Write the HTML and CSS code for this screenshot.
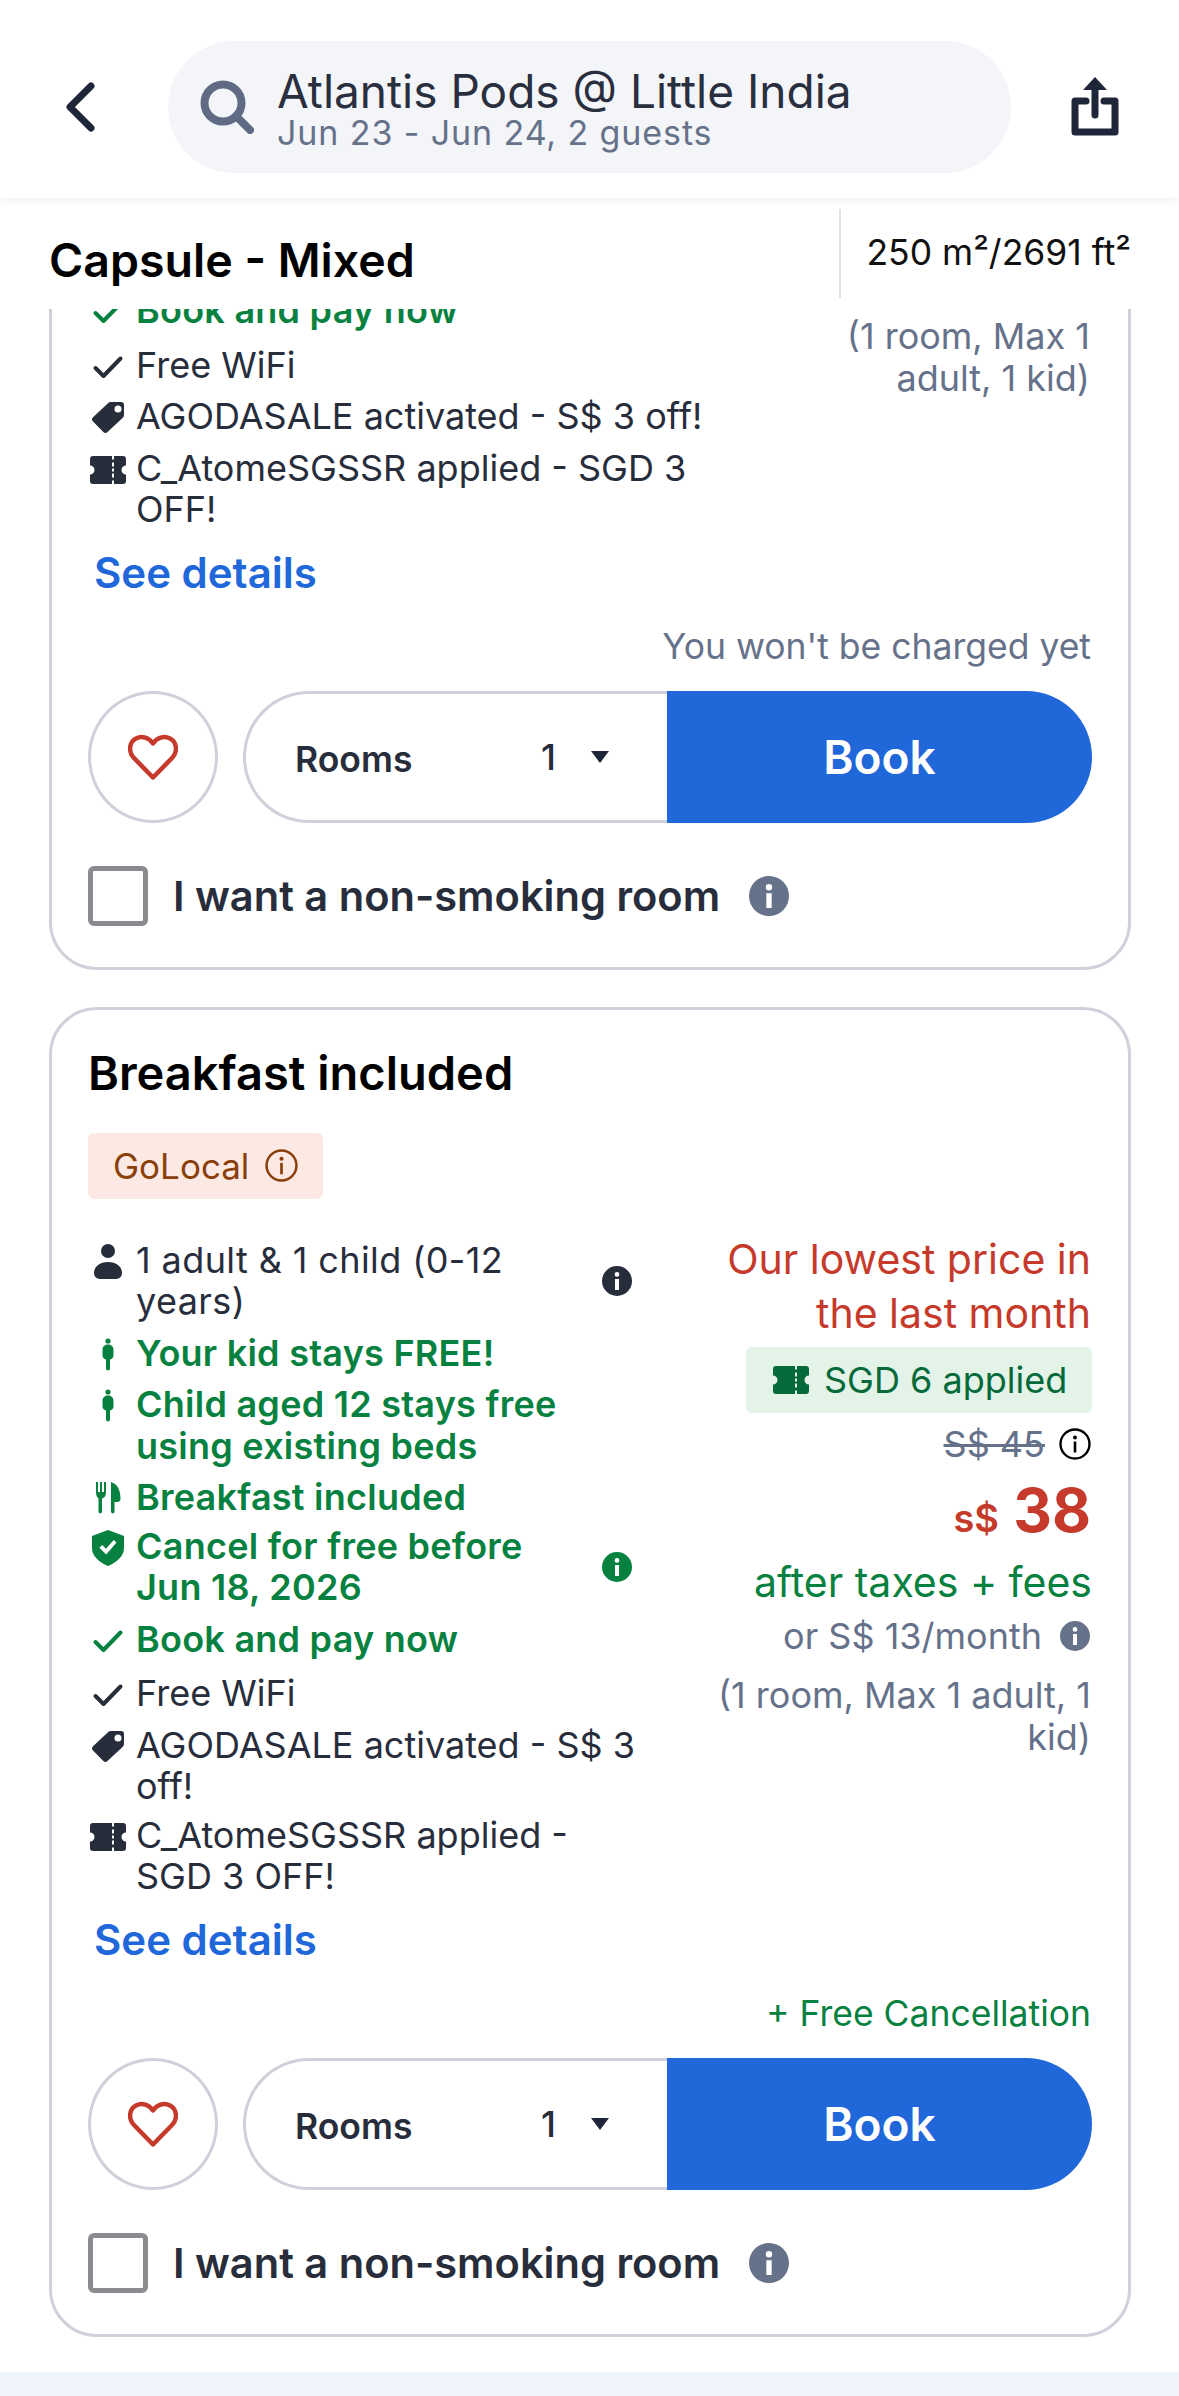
FILE: index.html
```html
<!DOCTYPE html>
<html lang="en">
<head>
    <meta charset="utf-8">
    <title>Atlantis Pods @ Little India</title>
    <link rel="stylesheet" href="styles.css">
</head>
<body>
    <svg class="sprite" xmlns="http://www.w3.org/2000/svg">
        <symbol id="i-ticket" viewBox="0 0 36 28">
            <path fill-rule="evenodd" d="M3 0h19v3.500h2V0h9a3 3 0 0 1 3 3v6.500a4.500 4.500 0 0 0 0 9V25a3 3 0 0 1-3 3h-9v-3.500h-2V28H3a3 3 0 0 1-3-3v-6.500a4.500 4.500 0 0 0 0-9V3a3 3 0 0 1 3-3zM22 6.500v4h2v-4zM22 12.500v3h2v-3zM22 17.500v4h2v-4z"/>
        </symbol>
        <symbol id="i-tag" viewBox="0 0 36 36">
            <path fill-rule="evenodd" d="M21 2h10a3 3 0 0 1 3 3v10a4 4 0 0 1-1.200 2.800L17.500 32a3 3 0 0 1-4.200 0L3 21.500a3 3 0 0 1 0-4.200L18 3.200A4 4 0 0 1 21 2zm7 3.500a3.500 3.500 0 1 0 0 7a3.500 3.500 0 0 0 0-7z"/>
        </symbol>
        <symbol id="i-check" viewBox="0 0 36 36">
            <path d="M5.500 19l8 8L30.500 9.500" fill="none" stroke="currentColor" stroke-width="4" stroke-linecap="round" stroke-linejoin="round"/>
        </symbol>
        <symbol id="i-info" viewBox="0 0 30 30">
            <path fill-rule="evenodd" d="M15 0a15 15 0 1 1 0 30a15 15 0 0 1 0-30zm0 6a2.400 2.400 0 1 0 0 4.800a2.400 2.400 0 0 0 0-4.800zm-2 7v11h4V13z"/>
        </symbol>
        <symbol id="i-info-line" viewBox="0 0 32 32">
            <circle cx="16" cy="16" r="14.500" fill="none" stroke="currentColor" stroke-width="2.400"/>
            <circle cx="16" cy="9.500" r="2"/>
            <rect x="14.700" y="13.500" width="2.600" height="11"/>
        </symbol>
        <symbol id="i-heart" viewBox="0 0 50 46">
            <path d="M25 43.500L6 24C0 18 1 8 8 4.500c6-3 13-1 17 5c4-6 11-8 17-5c7 3.500 8 13.500 2 19.500z" fill="none" stroke="currentColor" stroke-width="4.500" stroke-linejoin="round"/>
        </symbol>
        <symbol id="i-child" viewBox="0 0 36 36">
            <circle cx="18" cy="4" r="2.600"/>
            <path d="M18 7.500c3 0 5.500 2 5.500 5v6c0 2-1.500 3.500-3.500 4v9a2 2 0 0 1-4 0v-9c-2-.5-3.500-2-3.500-4v-6c0-3 2.500-5 5.500-5z"/>
        </symbol>
        <symbol id="i-person" viewBox="0 0 36 36">
            <circle cx="18" cy="7" r="7"/>
            <path d="M18 18c9 0 14 5 14 11c0 4-3 6-7 6H11c-4 0-7-2-7-6c0-6 5-11 14-11z"/>
        </symbol>
        <symbol id="i-meal" viewBox="0 0 36 36">
            <path d="M6 1h2v10h2V1h2v10h2V1h2v11c0 3-1.800 5-4 5.500V31a1.800 1.800 0 0 1-3.500 0V17.500C8 17 6 15 6 12z"/>
            <path d="M21 1c6 2 9.500 7 9.500 17c0 2-1.500 3-3 3h-3v10a1.800 1.800 0 0 1-3.500 0z"/>
        </symbol>
        <symbol id="i-shield" viewBox="0 0 36 36">
            <path fill-rule="evenodd" d="M18 0l16 6v12c0 8-7 14-16 18C9 32 2 26 2 18V6zm8.500 12.500l-2.800-2.400-7.700 8.700-3.800-3.800-2.800 2.800 6.800 6.800z"/>
        </symbol>
    </svg>

    <header class="topbar">
        <svg class="back-icon" viewBox="0 0 32 50"><path d="M27 4L6 25l21 21" fill="none" stroke="#20263a" stroke-width="7" stroke-linecap="round" stroke-linejoin="round"/></svg>
        <div class="search-pill">
            <svg class="search-icon" viewBox="0 0 54 54"><circle cx="23" cy="23" r="18.500" fill="none" stroke="#5f6b85" stroke-width="8"/><path d="M36 36l14 14" stroke="#5f6b85" stroke-width="8" stroke-linecap="round"/></svg>
            <div class="search-text">
                <div class="hotel-name">Atlantis Pods @ Little India</div>
                <div class="stay-dates">Jun 23 - Jun 24, 2 guests</div>
            </div>
        </div>
        <svg class="share-icon" viewBox="0 0 50 60"><path d="M16 24H5v31h40V24H34" fill="none" stroke="#20263a" stroke-width="7" stroke-linecap="round" stroke-linejoin="round"/><path d="M25 38V8" stroke="#20263a" stroke-width="7" stroke-linecap="round"/><path d="M25 0l12 13H13z" fill="#20263a"/></svg>
    </header>

    <div class="room-head">
        <h2>Capsule - Mixed</h2>
        <div class="room-size">250 m²/2691 ft²</div>
    </div>

    <main class="room-list">
        <section class="card card-scrolled">
            <div class="card-body">
                <ul class="perks perks-wide">
                    <li class="perk green bold"><svg class="perk-icon"><use href="#i-check"/></svg><span>Book and pay now</span></li>
                    <li class="perk"><svg class="perk-icon"><use href="#i-check"/></svg><span>Free WiFi</span></li>
                    <li class="perk"><svg class="perk-icon"><use href="#i-tag"/></svg><span>AGODASALE activated - S$ 3 off!</span></li>
                    <li class="perk"><svg class="perk-icon"><use href="#i-ticket"/></svg><span>C_AtomeSGSSR applied - SGD 3 OFF!</span></li>
                </ul>
                <div class="price-col price-narrow">
                    <div class="occupancy">(1 room, Max 1 adult, 1 kid)</div>
                </div>
            </div>
            <a class="see-details">See details</a>
            <div class="book-note">You won't be charged yet</div>
            <div class="book-row">
                <div class="fav-btn"><svg class="heart-icon"><use href="#i-heart"/></svg></div>
                <div class="rooms-select"><span class="rooms-label">Rooms</span><span class="rooms-count">1</span><span class="caret"></span></div>
                <div class="book-btn">Book</div>
            </div>
            <div class="smoke-row">
                <span class="checkbox"></span>
                <span class="smoke-label">I want a non-smoking room</span>
                <svg class="smoke-info"><use href="#i-info"/></svg>
            </div>
        </section>

        <section class="card card-full">
            <h3 class="card-title">Breakfast included</h3>
            <div class="promo-tag">GoLocal <svg class="promo-info"><use href="#i-info-line"/></svg></div>
            <div class="card-body body-gap">
                <ul class="perks perks-tight">
                    <li class="perk perk-loose">
                        <svg class="perk-icon"><use href="#i-person"/></svg>
                        <span>1 adult &amp; 1 child (0-12 years)</span>
                        <svg class="row-info"><use href="#i-info"/></svg>
                    </li>
                    <li class="perk green bold"><svg class="perk-icon"><use href="#i-child"/></svg><span>Your kid stays FREE!</span></li>
                    <li class="perk green bold"><svg class="perk-icon"><use href="#i-child"/></svg><span>Child aged 12 stays free using existing beds</span></li>
                    <li class="perk perk-close green bold"><svg class="perk-icon"><use href="#i-meal"/></svg><span>Breakfast included</span></li>
                    <li class="perk green bold">
                        <svg class="perk-icon"><use href="#i-shield"/></svg>
                        <span>Cancel for free before Jun 18, 2026</span>
                        <svg class="row-info"><use href="#i-info"/></svg>
                    </li>
                    <li class="perk green bold"><svg class="perk-icon"><use href="#i-check"/></svg><span>Book and pay now</span></li>
                    <li class="perk"><svg class="perk-icon"><use href="#i-check"/></svg><span>Free WiFi</span></li>
                    <li class="perk perk-close"><svg class="perk-icon"><use href="#i-tag"/></svg><span>AGODASALE activated - S$ 3 off!</span></li>
                    <li class="perk"><svg class="perk-icon"><use href="#i-ticket"/></svg><span>C_AtomeSGSSR applied - SGD 3 OFF!</span></li>
                </ul>
                <div class="price-col">
                    <div class="lowest">Our lowest price in the last month</div>
                    <div class="coupon"><svg class="coupon-icon"><use href="#i-ticket"/></svg>SGD 6 applied</div>
                    <div class="old-price"><s>S$ 45</s><svg class="old-info"><use href="#i-info-line"/></svg></div>
                    <div class="new-price"><span class="currency">S$</span> 38</div>
                    <div class="after-tax">after taxes + fees</div>
                    <div class="monthly">or S$ 13/month <svg class="monthly-info"><use href="#i-info"/></svg></div>
                    <div class="occupancy">(1 room, Max 1 adult, 1 kid)</div>
                </div>
            </div>
            <a class="see-details">See details</a>
            <div class="book-note note-green">+ Free Cancellation</div>
            <div class="book-row">
                <div class="fav-btn"><svg class="heart-icon"><use href="#i-heart"/></svg></div>
                <div class="rooms-select"><span class="rooms-label">Rooms</span><span class="rooms-count">1</span><span class="caret"></span></div>
                <div class="book-btn">Book</div>
            </div>
            <div class="smoke-row">
                <span class="checkbox"></span>
                <span class="smoke-label">I want a non-smoking room</span>
                <svg class="smoke-info"><use href="#i-info"/></svg>
            </div>
        </section>
    </main>
    <div class="page-foot"></div>
</body>
</html>
```

FILE: styles.css
```css
/* Hotel room list, phone layout */
* {
    box-sizing: border-box;
}

body {
    margin: 0;
    width: 1179px;
    height: 2396px;
    overflow: hidden;
    background-color: #fff;
    color: #282d3c;
    font-family: Inter, "Liberation Sans", sans-serif;
}

.sprite {
    display: none;
}

.topbar {
    position: relative;
    z-index: 2;
    display: flex;
    align-items: center;
    height: 198px;
    padding: 16px 0 0 64px;
    background: #fff;
    box-shadow: 0 2px 8px rgba(40, 50, 80, 0.08);
}

.back-icon {
    width: 32px;
    height: 50px;
    margin-right: 72px;
}

.search-pill {
    display: flex;
    align-items: center;
    width: 843px;
    height: 132px;
    padding-left: 32px;
    border-radius: 66px;
    background-color: #f3f5f9;
}

.search-icon {
    width: 54px;
    height: 54px;
    margin-right: 23px;
}

.hotel-name {
    margin-top: 1px;
    font-size: 46px;
    line-height: 50px;
    color: #2a2f3f;
}

.stay-dates {
    font-size: 34px;
    line-height: 34px;
    letter-spacing: 0.9px;
    color: #66718a;
}

.share-icon {
    width: 50px;
    height: 60px;
    margin-left: 59px;
}

.room-head {
    position: relative;
    z-index: 1;
    display: flex;
    align-items: center;
    justify-content: space-between;
    height: 111px;
    padding: 0 48px 0 49px;
    background: #fff;
}

.room-head h2 {
    margin: 12px 0 0;
    font-size: 46.500px;
    font-weight: 600;
    color: #000;
}

.room-size {
    height: 89px;
    padding: 23px 0 0 25px;
    border-left: 2px solid #dfe1e6;
    font-size: 35.500px;
    line-height: 42px;
    color: #111;
}

.room-list {
    display: flex;
    flex-direction: column;
    gap: 37px;
    height: 2063px;
    padding: 0 48px 0 49px;
}

.card {
    border: 3px solid #cfd1da;
    border-radius: 48px;
    padding: 38px 36px 41px;
    background: #fff;
}

.card-scrolled {
    margin-top: -80px;
    padding-top: 58px;
}

.card-full {
    padding-top: 35px;
}

.card-body {
    display: flex;
    justify-content: space-between;
}

.body-gap {
    margin-top: 34px;
}

.perks {
    margin: 0;
    padding: 7px 0 0;
    list-style: none;
}

.perks-wide {
    width: 650px;
    padding-top: 0;
}

.perks-tight {
    width: 552px;
}

.perk {
    display: flex;
    align-items: flex-start;
    margin-bottom: 10px;
    font-size: 36px;
    line-height: 41.500px;
    fill: #282d3c;
}

.perk.green + .perk:not(.green) {
    margin-top: 13px;
}

.perk-close {
    margin-bottom: 7px;
}

.perk-loose {
    letter-spacing: 0.4px;
}

.perk span {
    flex: 1;
}

.perk-icon {
    flex: none;
    width: 36px;
    height: 36px;
    margin: 4px 10px 0 2px;
    fill: currentColor;
}

.green {
    color: #07813f;
    fill: #07813f;
}

.bold {
    font-weight: 600;
    letter-spacing: 0.25px;
}

.row-info {
    flex: none;
    align-self: center;
    width: 30px;
    height: 30px;
    margin: 0 8px 0 32px;
    fill: currentColor;
}

.see-details {
    display: block;
    margin: 7px 0 0 6px;
    font-size: 42px;
    line-height: 50px;
    font-weight: 600;
    color: #2067da;
}

.book-note {
    margin-top: 27px;
    font-size: 35.500px;
    line-height: 44px;
    text-align: right;
    padding-right: 1px;
    color: #66718a;
}

.note-green {
    color: #07813f;
}

.book-row {
    display: flex;
    align-items: stretch;
    height: 132px;
    margin-top: 22px;
}

.fav-btn {
    display: flex;
    align-items: center;
    justify-content: center;
    width: 130px;
    margin-right: 25px;
    border: 3px solid #cfd1da;
    border-radius: 50%;
}

.heart-icon {
    width: 50px;
    height: 46px;
    color: #c53a2a;
}

.rooms-select {
    display: flex;
    align-items: center;
    width: 424px;
    padding-left: 49px;
    border: 3px solid #cfd1da;
    border-right: 0;
    border-radius: 66px 0 0 66px;
}

.rooms-label {
    width: 246px;
    padding-top: 5px;
    font-size: 35.500px;
    font-weight: 600;
    color: #282d3c;
}

.rooms-count {
    width: 50px;
    font-size: 36px;
    font-weight: 500;
}

.caret {
    width: 0;
    height: 0;
    border-left: 9px solid transparent;
    border-right: 9px solid transparent;
    border-top: 12px solid #20263a;
}

.book-btn {
    flex: 1;
    display: flex;
    align-items: center;
    justify-content: center;
    border-radius: 0 66px 66px 0;
    background-color: #2067da;
    font-size: 46px;
    font-weight: 600;
    color: #fff;
}

.smoke-row {
    display: flex;
    align-items: center;
    margin-top: 43px;
}

.checkbox {
    width: 60px;
    height: 60px;
    margin-right: 25px;
    border: 5px solid #8b8b8f;
    border-radius: 6px;
}

.smoke-label {
    font-size: 41.600px;
    font-weight: 600;
    color: #282d3c;
}

.smoke-info {
    width: 40px;
    height: 40px;
    margin-left: 29px;
    fill: #66718a;
}

.card-title {
    margin: 0;
    font-size: 47px;
    line-height: 56px;
    font-weight: 600;
    color: #000;
}

.promo-tag {
    display: inline-flex;
    align-items: center;
    gap: 16px;
    height: 66px;
    margin-top: 32px;
    padding: 0 25px;
    border-radius: 6px;
    background-color: #fde9e3;
    font-size: 35px;
    color: #8a3f0b;
    fill: #8a3f0b;
}

.promo-info {
    width: 33px;
    height: 33px;
    color: #8a3f0b;
}

.price-col {
    display: flex;
    flex-direction: column;
    align-items: flex-end;
    width: 420px;
    text-align: right;
}

.price-narrow {
    width: 300px;
    padding: 25px 1px 0 0;
}

.lowest {
    width: 410px;
    margin-top: -1px;
    padding-right: 1px;
    font-size: 41px;
    line-height: 54px;
    color: #c53a2a;
}

.coupon {
    display: flex;
    align-items: center;
    width: 346px;
    height: 66px;
    margin-top: 7px;
    padding-left: 27px;
    border-radius: 6px;
    background-color: #e3f3e8;
    font-size: 36px;
    color: #06693a;
    fill: #06693a;
}

.coupon-icon {
    width: 36px;
    height: 28px;
    margin-right: 15px;
}

.old-price {
    display: flex;
    align-items: center;
    gap: 14px;
    margin-top: 9px;
    padding-right: 1px;
    font-size: 36px;
    line-height: 44px;
    color: #66718a;
}

.old-info {
    width: 32px;
    height: 32px;
    color: #000;
    fill: #000;
}

.new-price {
    margin-top: 6px;
    padding-right: 1px;
    font-size: 60px;
    line-height: 76px;
    font-weight: 700;
    color: #c53a2a;
}

.currency {
    font-size: 38px;
    font-weight: 600;
    text-transform: lowercase;
}

.after-tax {
    margin-top: 0;
    font-size: 41px;
    line-height: 52px;
    color: #07813f;
}

.monthly {
    display: flex;
    align-items: center;
    gap: 18px;
    margin-top: 6px;
    padding-right: 2px;
    font-size: 36px;
    line-height: 44px;
    color: #66718a;
}

.monthly-info {
    width: 30px;
    height: 30px;
    fill: #66718a;
}

.occupancy {
    margin-top: 16px;
    padding-right: 1px;
    font-size: 36px;
    line-height: 42px;
    color: #66718a;
}

.price-narrow .occupancy {
    margin-top: 0;
}

.page-foot {
    height: 24px;
    background-color: #eff3fb;
}
```
